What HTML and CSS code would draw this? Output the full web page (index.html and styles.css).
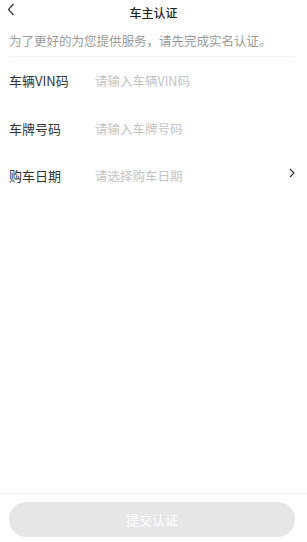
FILE: index.html
```html
<!DOCTYPE html>
<html lang="zh-CN">
<head>
  <meta charset="UTF-8">
  <title>车主认证</title>
  <link rel="stylesheet" href="styles.css">
</head>
<body>
  <div class="page">
    <header class="topbar">
      <span class="back">
        <svg width="8" height="13" viewBox="0 0 8 13"><path d="M6.5 1 L1.5 6.5 L6.5 12" fill="none" stroke="#333" stroke-width="1.2"/></svg>
      </span>
      <h1>车主认证</h1>
    </header>

    <main class="content">
      <p class="tip">为了更好的为您提供服务，请先完成实名认证。</p>
      <div class="form">
        <div class="row">
          <span class="label">车辆VIN码</span>
          <input type="text" placeholder="请输入车辆VIN码">
        </div>
        <div class="row">
          <span class="label">车牌号码</span>
          <input type="text" placeholder="请输入车牌号码">
        </div>
        <div class="row">
          <span class="label">购车日期</span>
          <span class="placeholder">请选择购车日期</span>
          <svg class="arrow" width="6" height="10" viewBox="0 0 6 10"><path d="M1 1 L5 5 L1 9" fill="none" stroke="#333" stroke-width="1.1"/></svg>
        </div>
      </div>
    </main>

    <footer class="footer">
      <button type="button" disabled>提交认证</button>
    </footer>
  </div>
</body>
</html>
```

FILE: styles.css
```css
* {
  box-sizing: border-box;
}
body {
  margin: 0;
  font-family: "Noto Sans CJK SC", "Noto Sans", sans-serif;
  background-color: #fff;
  color: #333;
}
.page {
  height: 100vh;
  display: flex;
  flex-direction: column;
}
.topbar {
  height: 24px;
  display: flex;
  align-items: center;
  justify-content: center;
  position: relative;
}
.topbar h1 {
  margin: 0;
  font-size: 12px;
  font-weight: 500;
  color: #222;
}
.back {
  position: absolute;
  left: 7px;
  top: 3px;
  display: flex;
}
.content {
  flex: 1;
  padding: 0 12px 0 9px;
}
.tip {
  margin: 0;
  height: 33px;
  line-height: 33px;
  font-size: 12.5px;
  color: #9a9a9a;
  border-bottom: 1px solid #f2f2f2;
  white-space: nowrap;
}
.row {
  height: 47.5px;
  display: flex;
  align-items: center;
}
.label {
  width: 86px;
  font-size: 13px;
  color: #333;
}
.row input {
  flex: 1;
  border: none;
  outline: none;
  padding: 0;
  font-family: inherit;
  font-size: 12.5px;
  color: #333;
  background: transparent;
}
.row input::placeholder,
.placeholder {
  color: #c4c4c4;
}
.placeholder {
  flex: 1;
  font-size: 12.5px;
}
.arrow {
  margin-top: -6px;
}
.footer {
  border-top: 1px solid #f4f4f4;
  padding: 8px 12px 5px 9px;
}
.footer button {
  width: 100%;
  height: 35px;
  border: none;
  border-radius: 18px;
  background-color: #e6e6e8;
  color: #fff;
  font-family: inherit;
  font-size: 13px;
}
```
